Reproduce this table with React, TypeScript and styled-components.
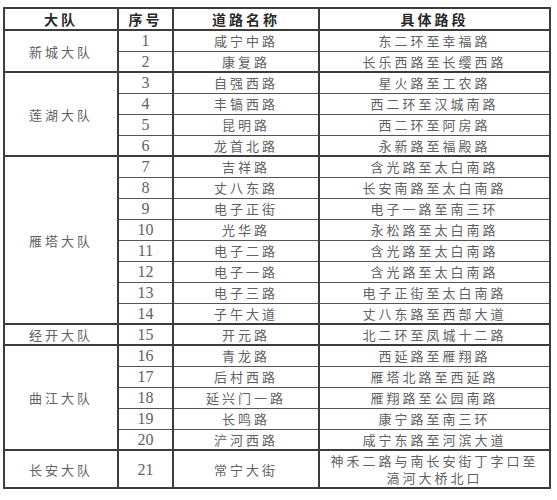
import styled, { createGlobalStyle } from 'styled-components';

const GlobalStyle = createGlobalStyle`
  html, body {
    margin: 0;
    padding: 0;
    background: #ffffff;
  }
`;

const Page = styled.div`
  width: 557px;
  height: 500px;
  padding: 7px 0 0 3px;
  box-sizing: border-box;
  background: #ffffff;
`;

const Table = styled.table`
  width: 546px;
  border-collapse: collapse;
  table-layout: fixed;
  border: 2px solid #3c3c3c;
  font-family: 'Noto Sans CJK SC', 'Noto Sans', sans-serif;
  color: #626262;
`;

const Row = styled.tr<{ $h?: number }>`
  height: ${(p) => p.$h ?? 21}px;
`;

const HeadCell = styled.th`
  border: 2px solid #3c3c3c;
  padding: 0;
  font-weight: 700;
  font-size: 14px;
  letter-spacing: 3px;
  color: #2a2a2a;
  text-align: center;
  vertical-align: middle;
  line-height: 18px;
`;

const Cell = styled.td<{ $top?: boolean; $num?: boolean; $end?: boolean }>`
  border-left: 2px solid #3c3c3c;
  border-right: 2px solid #3c3c3c;
  border-top: ${(p) => (p.$top ? '2px solid #3c3c3c' : '1px solid #555')};
  border-bottom: ${(p) => (p.$end ? '2px solid #3c3c3c' : '1px solid #555')};
  padding: 0;
  text-align: center;
  vertical-align: middle;
  font-size: ${(p) => (p.$num ? '16px' : '13px')};
  font-family: ${(p) =>
    p.$num ? "'Liberation Serif', serif" : "'Noto Sans CJK SC', sans-serif"};
  letter-spacing: ${(p) => (p.$num ? '0' : '3px')};
  line-height: 17px;
`;

const Wrap = styled.span`
  display: inline-block;
  width: 215px;
`;

type Item = [string, string];
type Group = { name: string; items: Item[] };

const groups: Group[] = [
  {
    name: '新城大队',
    items: [
      ['咸宁中路', '东二环至幸福路'],
      ['康复路', '长乐西路至长缨西路'],
    ],
  },
  {
    name: '莲湖大队',
    items: [
      ['自强西路', '星火路至工农路'],
      ['丰镐西路', '西二环至汉城南路'],
      ['昆明路', '西二环至阿房路'],
      ['龙首北路', '永新路至福殿路'],
    ],
  },
  {
    name: '雁塔大队',
    items: [
      ['吉祥路', '含光路至太白南路'],
      ['丈八东路', '长安南路至太白南路'],
      ['电子正街', '电子一路至南三环'],
      ['光华路', '永松路至太白南路'],
      ['电子二路', '含光路至太白南路'],
      ['电子一路', '含光路至太白南路'],
      ['电子三路', '电子正街至太白南路'],
      ['子午大道', '丈八东路至西部大道'],
    ],
  },
  {
    name: '经开大队',
    items: [['开元路', '北二环至凤城十二路']],
  },
  {
    name: '曲江大队',
    items: [
      ['青龙路', '西延路至雁翔路'],
      ['后村西路', '雁塔北路至西延路'],
      ['延兴门一路', '雁翔路至公园南路'],
      ['长鸣路', '康宁路至南三环'],
      ['浐河西路', '咸宁东路至河滨大道'],
    ],
  },
  {
    name: '长安大队',
    items: [['常宁大街', '神禾二路与南长安街丁字口至滈河大桥北口']],
  },
];

export default function App() {
  let n = 0;
  return (
    <Page>
      <GlobalStyle />
      <Table>
        <colgroup>
          <col style={{ width: 114 }} />
          <col style={{ width: 55 }} />
          <col style={{ width: 146 }} />
          <col style={{ width: 231 }} />
        </colgroup>
        <thead>
          <Row $h={22}>
            <HeadCell>大队</HeadCell>
            <HeadCell>序号</HeadCell>
            <HeadCell>道路名称</HeadCell>
            <HeadCell>具体路段</HeadCell>
          </Row>
        </thead>
        <tbody>
          {groups.map((g) =>
            g.items.map((it, i) => {
              n += 1;
              const first = i === 0;
              const last = i === g.items.length - 1;
              const long = it[1].length > 12;
              return (
                <Row key={n} $h={long ? 38 : 21}>
                  {first && (
                    <Cell rowSpan={g.items.length} $top $end>
                      {g.name}
                    </Cell>
                  )}
                  <Cell $num $top={first} $end={last}>
                    {n}
                  </Cell>
                  <Cell $top={first} $end={last}>
                    {it[0]}
                  </Cell>
                  <Cell $top={first} $end={last}>
                    {long ? <Wrap>{it[1]}</Wrap> : it[1]}
                  </Cell>
                </Row>
              );
            })
          )}
        </tbody>
      </Table>
    </Page>
  );
}
